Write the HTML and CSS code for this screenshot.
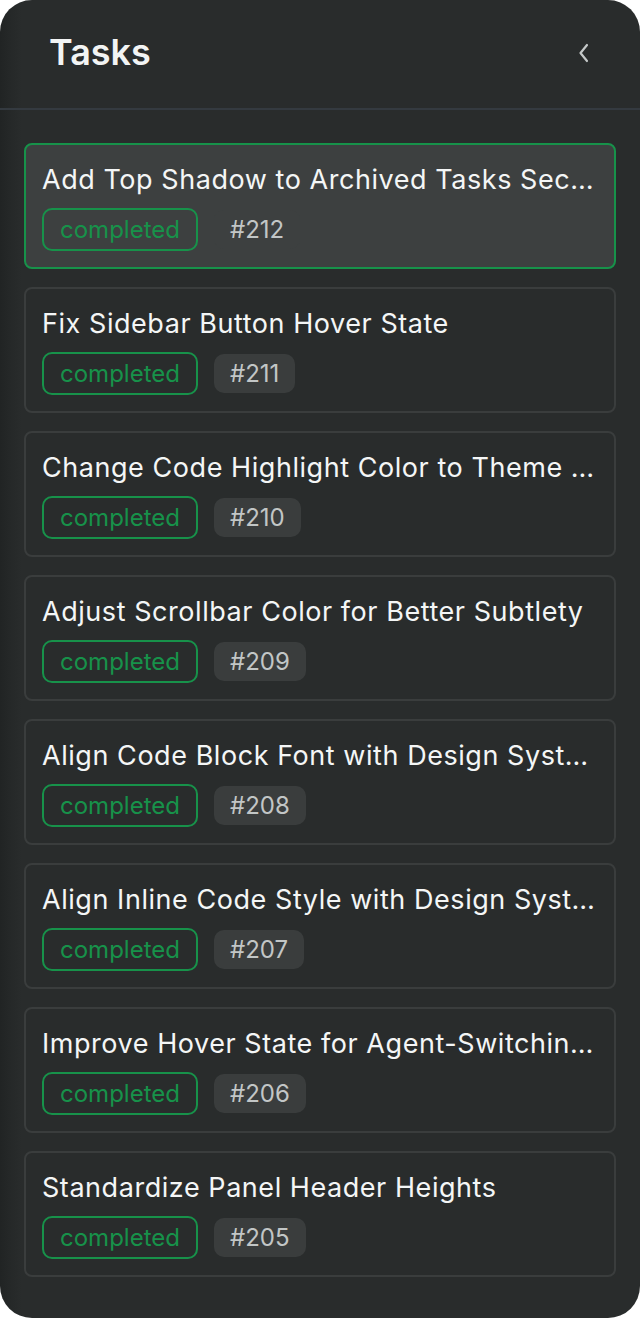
FILE: index.html
```html
<!DOCTYPE html>
<html lang="en">
<head>
<meta charset="utf-8">
<title>Tasks</title>
<link rel="stylesheet" href="styles.css">
</head>
<body>
<div class="panel">
  <header class="panel-header">
    <h1 class="panel-title">Tasks</h1>
    <button class="collapse-btn" aria-label="Collapse">
      <svg width="16" height="24" viewBox="0 0 16 24" fill="none"><path d="M11 4 L4.5 12 L11 20" stroke="#c4c8c8" stroke-width="2.2" stroke-linecap="round" stroke-linejoin="round"/></svg>
    </button>
  </header>
  <div class="task-list">
    <div class="task-card is-active">
      <div class="task-title">Add Top Shadow to Archived Tasks Section Header</div>
      <div class="task-meta"><span class="status">completed</span><span class="task-id">#212</span></div>
    </div>
    <div class="task-card">
      <div class="task-title">Fix Sidebar Button Hover State</div>
      <div class="task-meta"><span class="status">completed</span><span class="task-id">#211</span></div>
    </div>
    <div class="task-card">
      <div class="task-title">Change Code Highlight Color to Theme Accent</div>
      <div class="task-meta"><span class="status">completed</span><span class="task-id">#210</span></div>
    </div>
    <div class="task-card">
      <div class="task-title">Adjust Scrollbar Color for Better Subtlety</div>
      <div class="task-meta"><span class="status">completed</span><span class="task-id">#209</span></div>
    </div>
    <div class="task-card">
      <div class="task-title">Align Code Block Font with Design System</div>
      <div class="task-meta"><span class="status">completed</span><span class="task-id">#208</span></div>
    </div>
    <div class="task-card">
      <div class="task-title">Align Inline Code Style with Design System</div>
      <div class="task-meta"><span class="status">completed</span><span class="task-id">#207</span></div>
    </div>
    <div class="task-card">
      <div class="task-title">Improve Hover State for Agent-Switching Buttons</div>
      <div class="task-meta"><span class="status">completed</span><span class="task-id">#206</span></div>
    </div>
    <div class="task-card">
      <div class="task-title">Standardize Panel Header Heights</div>
      <div class="task-meta"><span class="status">completed</span><span class="task-id">#205</span></div>
    </div>
  </div>
</div>
</body>
</html>
```
FILE: styles.css
```css
* { box-sizing: border-box; }
html, body { margin: 0; padding: 0; background: #ffffff; }
body { font-family: Inter, "Noto Sans", sans-serif; }

.panel {
  width: 640px;
  height: 1318px;
  border-radius: 32px;
  overflow: hidden;
  background: linear-gradient(to right, #212424 0, #262929 12px, #292c2c 22px);
  display: flex;
  flex-direction: column;
}

.panel-header {
  height: 110px;
  flex: none;
  display: flex;
  align-items: center;
  justify-content: space-between;
  padding: 0 48px 0 49px;
  border-bottom: 2px solid #343a40;
}

.panel-title {
  margin: 0 0 4px 0;
  font-size: 36px;
  font-weight: 600;
  color: #f2f4f4;
  line-height: 44px;
}

.collapse-btn {
  background: none;
  border: 0;
  padding: 0;
  margin: 0 0 3px 0;
  width: 16px;
  height: 24px;
  display: flex;
  align-items: center;
  justify-content: center;
}

.task-list {
  padding: 33px 24px 0 24px;
  display: flex;
  flex-direction: column;
  gap: 18px;
}

.task-card {
  border: 2px solid #3a3d3d;
  border-radius: 8px;
  padding: 16px;
  height: 126px;
}

.task-card.is-active {
  background: #3d4040;
  border-color: #17924a;
}

.task-title {
  font-size: 27px;
  line-height: 36px;
  letter-spacing: 0.55px;
  color: #f4f6f6;
  white-space: nowrap;
  overflow: hidden;
  text-overflow: ellipsis;
  margin: 1px 0 10px 0;
}

.task-meta {
  display: flex;
  align-items: center;
  gap: 16px;
}

.status {
  border: 2px solid #17924a;
  border-radius: 10px;
  color: #17924a;
  font-size: 24px;
  line-height: 31px;
  padding: 4px 16px;
}

.task-id {
  background: #3a3d3d;
  border-radius: 10px;
  color: #c2c6c6;
  font-size: 24px;
  line-height: 31px;
  padding: 4px 16px;
}

.is-active .task-id {
  background: #3d4040;
}
```
